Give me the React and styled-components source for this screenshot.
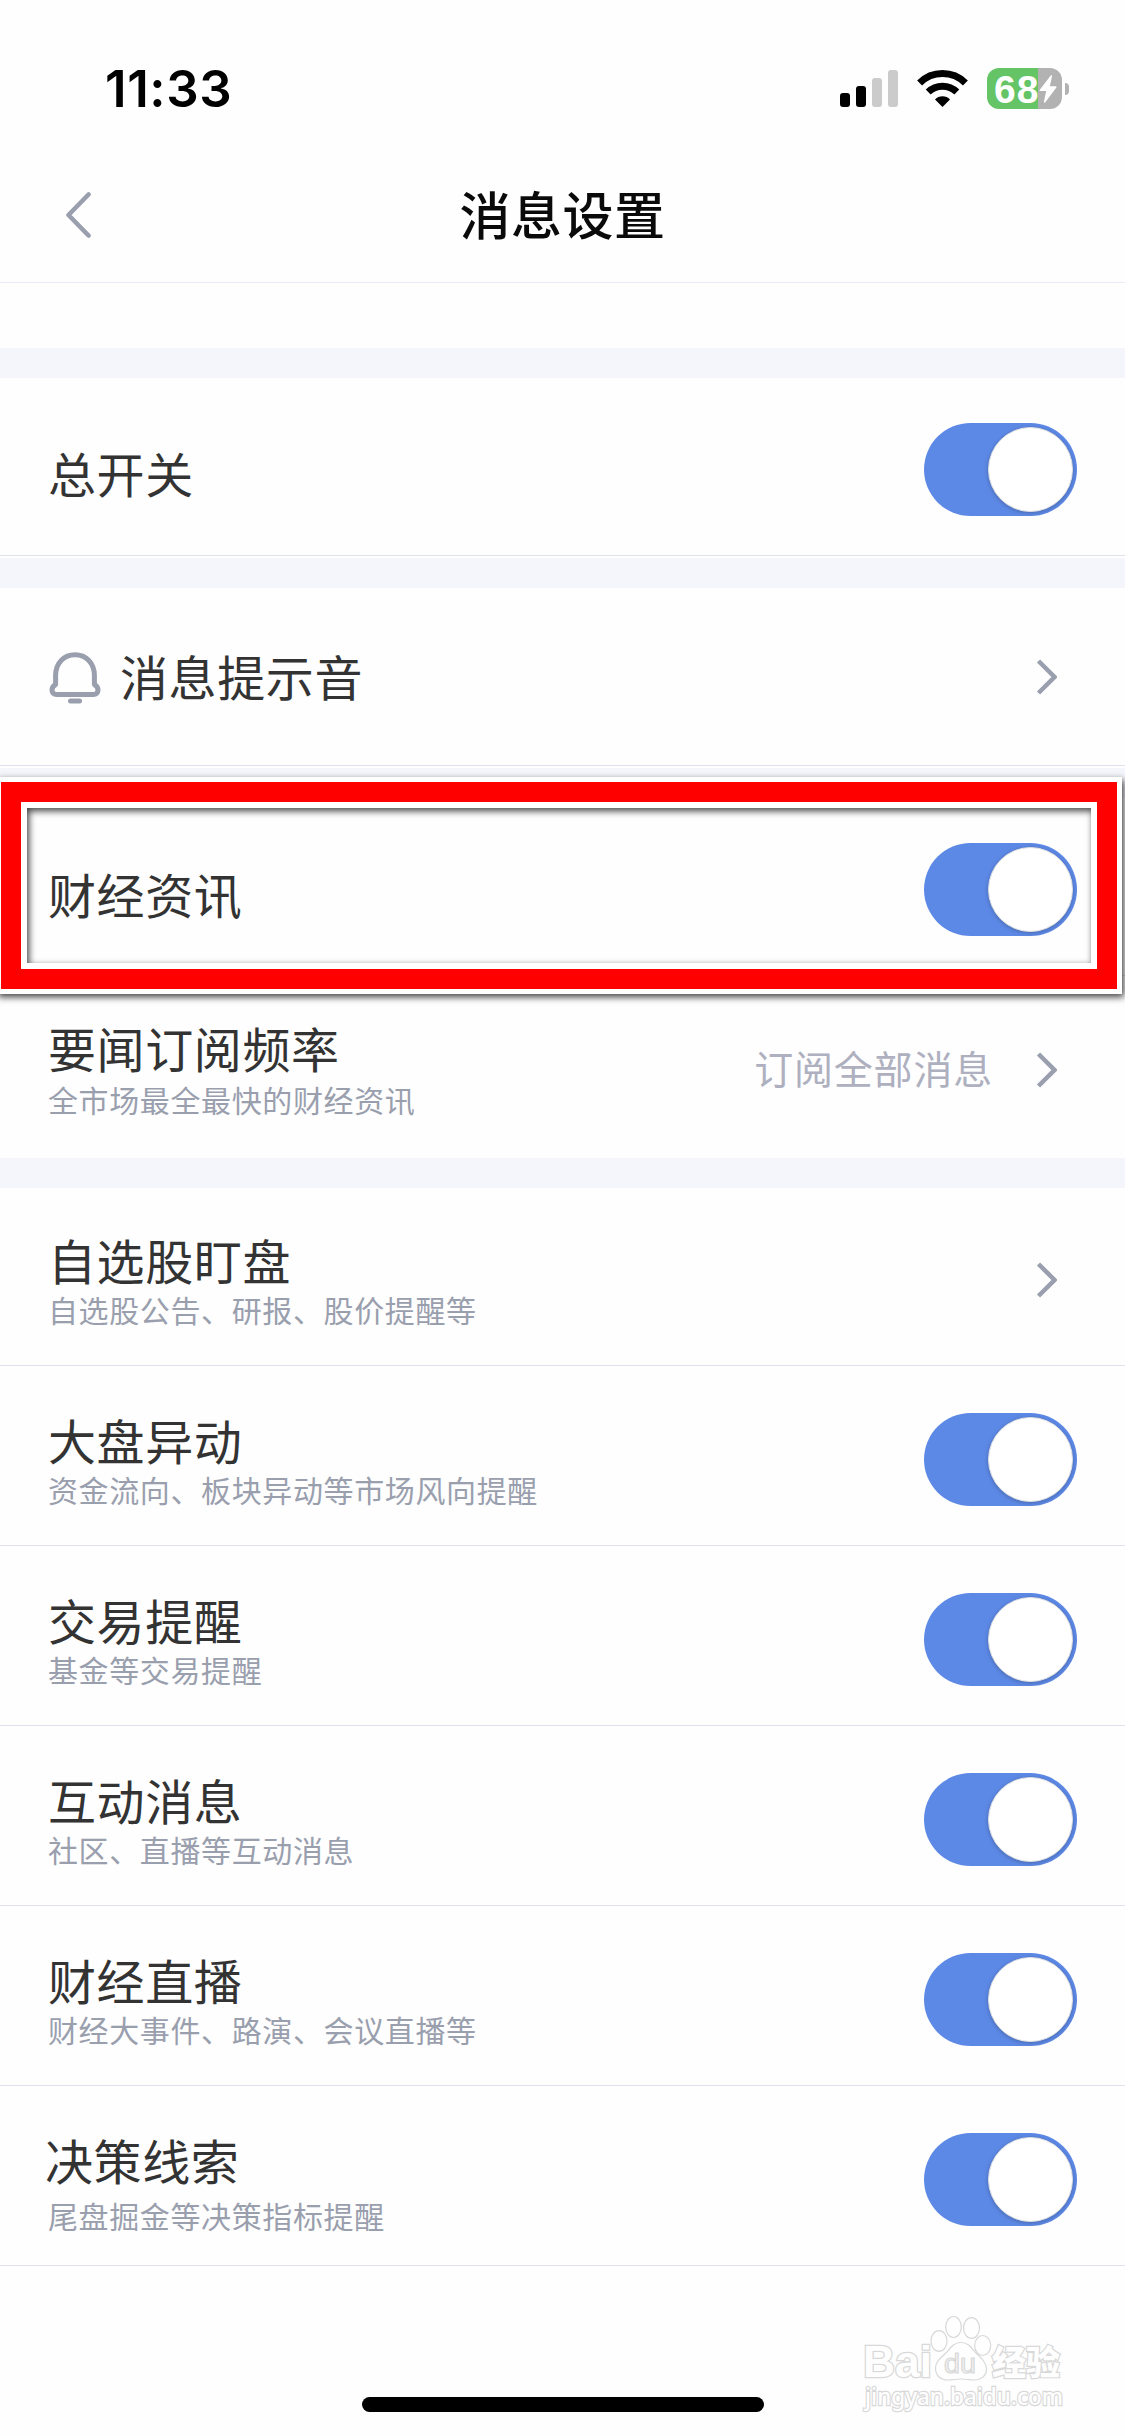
import React, { useState } from 'react'
import styled, { createGlobalStyle, css } from 'styled-components'

const groups = [
  { id: 'master', items: [{ id: 'all', title: '总开关', toggle: true, line: true }] },
  { id: 'sound', items: [{ id: 'sound', title: '消息提示音', icon: true, line: true }] },
  {
    id: 'news',
    items: [
      { id: 'news', title: '财经资讯', toggle: true, line: true, marked: true, shift: 1 },
      { id: 'rate', title: '要闻订阅频率', desc: '全市场最全最快的财经资讯', value: '订阅全部消息', shift: -2 },
    ],
  },
  {
    id: 'market',
    items: [
      { id: 'stock', title: '自选股盯盘', desc: '自选股公告、研报、股价提醒等', line: true },
      { id: 'move', title: '大盘异动', desc: '资金流向、板块异动等市场风向提醒', toggle: true, line: true },
      { id: 'trade', title: '交易提醒', desc: '基金等交易提醒', toggle: true, line: true },
      { id: 'social', title: '互动消息', desc: '社区、直播等互动消息', toggle: true, line: true },
      { id: 'live', title: '财经直播', desc: '财经大事件、路演、会议直播等', toggle: true, line: true },
      { id: 'clue', title: '决策线索', desc: '尾盘掘金等决策指标提醒', toggle: true, line: true, loose: true },
    ],
  },
]

const SignalIcon = () => (
  <svg width="58" height="37" viewBox="0 0 58 37">
    <rect x="0" y="23" width="10" height="14" rx="3" fill="#000" />
    <rect x="16" y="16" width="10" height="21" rx="3" fill="#000" />
    <rect x="32" y="8" width="10" height="29" rx="3" fill="#cbcbcb" />
    <rect x="48" y="0" width="10" height="37" rx="3" fill="#cbcbcb" />
  </svg>
)

const WifiIcon = () => (
  <svg width="51" height="37" viewBox="0 0 51 37">
    <path d="M2.6 13A32.5 32.5 0 0 1 48.4 13" fill="none" stroke="#000" strokeWidth="7" />
    <path d="M11.2 22A20.4 20.4 0 0 1 39.8 22" fill="none" stroke="#000" strokeWidth="7" />
    <path d="M25.5 37L18 29.4a10.6 10.6 0 0 1 15 0z" fill="#000" />
  </svg>
)

const BoltIcon = () => (
  <svg width="18" height="28" viewBox="0 0 18 28">
    <path d="M12.3 1L1.2 15.4H8L5.6 27L16.8 12H10z" fill="#fff" stroke="#fff" strokeWidth="1.4" strokeLinejoin="round" />
  </svg>
)

const BackIcon = () => (
  <svg width="26" height="46" viewBox="0 0 26 46">
    <path d="M23.5 2.5L3.5 23L23.5 43.5" fill="none" stroke="#9a9fae" strokeWidth="4.6" strokeLinecap="round" strokeLinejoin="round" />
  </svg>
)

const ArrowIcon = () => (
  <svg width="21" height="36" viewBox="0 0 21 36">
    <path d="M2.5 2L18.5 18L2.5 34" fill="none" stroke="#9a9fae" strokeWidth="4.5" />
  </svg>
)

const BellIcon = () => (
  <svg width="52" height="52" viewBox="0 0 52 52" fill="none" stroke="#9a9fae" strokeWidth="5">
    <path
      d="M6.6 23.5C6.6 11 15 2.8 26 2.8S45.4 11 45.4 23.5V32.5C48 34 49 36 49 38.2C49 41 47 42.5 44.5 42.5H7.5C5 42.5 3 41 3 38.2C3 36 4 34 6.6 32.5Z"
      strokeLinejoin="round"
    />
    <path d="M21.5 49H30.5" strokeLinecap="round" />
  </svg>
)

const Watermark = () => (
  <WatermarkBox>
    <svg width="210" height="110" viewBox="0 0 210 110" fill="#fefefe" stroke="#d8d8d8" strokeWidth="1.2">
      <text x="3" y="71" fontSize="45" fontFamily='"Liberation Sans", sans-serif' fontWeight="700" paintOrder="stroke" strokeWidth="2.6" textLength="69" lengthAdjust="spacingAndGlyphs">Bai</text>
      <ellipse cx="79" cy="35" rx="8" ry="10.3" />
      <ellipse cx="93.5" cy="21" rx="7.8" ry="10.5" />
      <ellipse cx="111.5" cy="22" rx="8" ry="10.3" />
      <ellipse cx="122.7" cy="39.5" rx="8" ry="10" />
      <path d="M101 36.5C108 36.5 111 41 115 46C120 51 126.5 56 126.5 63C126.5 70 121 74 114 74C109 74 106 73 101 73C96 73 93 74 88 74C81 74 75.5 70 75.5 62C75.5 55 82 51 87 46C91 41 94 36.5 101 36.5Z" />
      <text x="84" y="67" fontSize="28" fontFamily='"Liberation Sans", sans-serif' fill="#f4f4f4" textLength="32" lengthAdjust="spacingAndGlyphs">du</text>
      <text x="132" y="69" fontSize="34" fontFamily='"Noto Sans CJK SC", sans-serif' fontWeight="900" paintOrder="stroke" strokeWidth="2.4" textLength="68">经验</text>
      <text x="5" y="99" fontSize="24" fontFamily='"Noto Sans", sans-serif' fontWeight="500" paintOrder="stroke" strokeWidth="2.4" textLength="198" lengthAdjust="spacingAndGlyphs">jingyan.baidu.com</text>
    </svg>
  </WatermarkBox>
)

const App = () => {
  const [off, setOff] = useState([])

  const toggleHandler = (id) => {
    setOff(off.includes(id) ? off.filter((item) => item !== id) : [...off, id])
  }

  return (
    <Page>
      <GlobalStyle />
      <StatusBar>
        <Clock>11:33</Clock>
        <StatusIcons>
          <SignalIcon />
          <WifiIcon />
          <Battery>
            <BatteryBody>
              <BatteryText>68</BatteryText>
              <BoltIcon />
            </BatteryBody>
            <BatteryCap />
          </Battery>
        </StatusIcons>
      </StatusBar>
      <NavBar>
        <BackButton>
          <BackIcon />
        </BackButton>
        <NavTitle>消息设置</NavTitle>
      </NavBar>
      <Blank />
      {groups.map((group) => (
        <Group key={group.id}>
          {group.items.map((item) => (
            <Row key={item.id}>
              {item.icon && (
                <IconBox>
                  <BellIcon />
                </IconBox>
              )}
              <TextBox $desc={!!item.desc} $icon={item.icon} $shift={item.shift}>
                <Title $loose={item.loose}>{item.title}</Title>
                {item.desc && <Desc $loose={item.loose} $shift={item.shift}>{item.desc}</Desc>}
              </TextBox>
              {item.value && <Value>{item.value}</Value>}
              {item.toggle ? (
                <Switch $on={!off.includes(item.id)} onClick={() => toggleHandler(item.id)}>
                  <Knob />
                </Switch>
              ) : (
                <Arrow $icon={item.icon}>
                  <ArrowIcon />
                </Arrow>
              )}
              {item.line && <Line />}
              {item.marked && (
                <Mark>
                  <MarkRed>
                    <MarkInner />
                  </MarkRed>
                </Mark>
              )}
            </Row>
          ))}
        </Group>
      ))}
      <Footer>
        <Watermark />
        <HomeBar />
      </Footer>
    </Page>
  )
}

export default App

const GlobalStyle = createGlobalStyle`
  * {
    box-sizing: border-box;
  }
  body {
    margin: 0;
    background-color: #fefefe;
    font-family: 'Noto Sans CJK SC', sans-serif;
  }
  svg {
    display: block;
    flex: none;
  }
`

const Page = styled.div`
  width: 1125px;
  height: 2436px;
  display: flex;
  flex-direction: column;
  overflow: hidden;
  background-color: #fefefe;
`
const StatusBar = styled.div`
  height: 132px;
  padding: 59px 56px 0 105px;
  display: flex;
  justify-content: space-between;
  align-items: flex-start;
`
const Clock = styled.div`
  font-family: Inter, sans-serif;
  font-size: 51px;
  font-weight: 600;
  line-height: 60px;
  letter-spacing: 0.6px;
  color: #000;
`
const StatusIcons = styled.div`
  height: 41px;
  margin-top: 9px;
  display: flex;
  align-items: center;
  gap: 19px;
`
const Battery = styled.div`
  display: flex;
  align-items: center;
  gap: 3px;
`
const BatteryBody = styled.div`
  width: 75px;
  height: 41px;
  padding-left: 7px;
  display: flex;
  align-items: center;
  gap: 1px;
  border-radius: 12px;
  background: linear-gradient(to right, #65c466 51px, #b2b2b2 51px);
`
const BatteryText = styled.span`
  width: 44px;
  padding-top: 1px;
  font-family: 'Liberation Sans', sans-serif;
  font-size: 39px;
  font-weight: 700;
  line-height: 41px;
  letter-spacing: 1px;
  color: #fff;
`
const BatteryCap = styled.div`
  width: 4px;
  height: 12px;
  border-radius: 0 4px 4px 0;
  background-color: #b2b2b2;
`
const NavBar = styled.div`
  height: 151px;
  display: grid;
  grid-template-columns: 200px 1fr 200px;
  border-bottom: 1px solid #ebebf7;
`
const BackButton = styled.button`
  padding: 60px 0 0 65px;
  border: none;
  background: none;
  display: flex;
  align-items: flex-start;
  cursor: pointer;
`
const NavTitle = styled.h1`
  margin: 43px 0 0;
  font-size: 51px;
  font-weight: 500;
  line-height: 76px;
  letter-spacing: 0.5px;
  text-align: center;
  color: #0a0a0a;
`
const Blank = styled.div`
  height: 65px;
`
const Group = styled.section`
  border-top: 30px solid #f5f6fb;
`
const Row = styled.div`
  position: relative;
  height: 180px;
  padding: 0 48px;
  display: flex;
  align-items: flex-start;
`
const IconBox = styled.div`
  margin: 64px 19px 0 1px;
`
const TextBox = styled.div`
  flex: 1;
  margin-top: ${({ $desc, $icon, $shift = 0 }) => ($desc ? 41 : $icon ? 57 : 64) + $shift}px;
`
const Title = styled.div`
  font-size: 48px;
  line-height: 60px;
  letter-spacing: 0.6px;
  color: #333;
  ${({ $loose }) =>
    $loose &&
    css`
      margin-left: -3px;
    `}
`
const Desc = styled.div`
  margin-top: ${({ $loose, $shift = 0 }) => ($loose ? 8 : 2) - $shift}px;
  font-size: 30px;
  line-height: 36px;
  letter-spacing: 0.62px;
  color: #9a9fae;
`
const Value = styled.div`
  margin: 60px 43px 0 0;
  font-size: 39px;
  line-height: 58px;
  letter-spacing: 0.8px;
  color: #aeb0bf;
`
const Switch = styled.button`
  width: 153px;
  height: 93px;
  margin-top: 45px;
  padding: 4px;
  border: none;
  border-radius: 47px;
  display: flex;
  justify-content: ${({ $on }) => ($on ? 'flex-end' : 'flex-start')};
  background-color: ${({ $on }) => ($on ? '#5d89e6' : '#e5e5ea')};
  cursor: pointer;
`
const Knob = styled.span`
  width: 85px;
  height: 85px;
  border-radius: 50%;
  border: 1px solid #dfe0e2;
  background-color: #fff;
  box-shadow: 0 1px 4px rgba(0, 0, 0, 0.25);
`
const Arrow = styled.div`
  margin: ${({ $icon }) => ($icon ? 71 : 74)}px 20px 0 0;
`
const Line = styled.div`
  position: absolute;
  left: 0;
  right: 0;
  bottom: 2px;
  height: 1px;
  background-color: #e2e2ee;
`
// highlight frame lying over the row
const Mark = styled.div`
  position: absolute;
  z-index: 1;
  left: -4px;
  top: -21px;
  width: 1126px;
  height: 217px;
  border: 5px solid #fff;
  box-shadow: 2px 3px 7px rgba(0, 0, 0, 0.75);
  pointer-events: none;
`
const MarkRed = styled.div`
  height: 100%;
  border: 20px solid #f00;
`
const MarkInner = styled.div`
  height: 100%;
  border: 6px solid #fff;
  box-shadow: inset 2px 3px 7px rgba(0, 0, 0, 0.75);
`
const Footer = styled.div`
  position: relative;
  flex: 1;
  display: flex;
  justify-content: center;
  align-items: flex-end;
  padding-bottom: 24px;
`
const HomeBar = styled.div`
  width: 402px;
  height: 15px;
  border-radius: 8px;
  background-color: #000;
`
const WatermarkBox = styled.div`
  position: absolute;
  right: 55px;
  bottom: 20px;
`
